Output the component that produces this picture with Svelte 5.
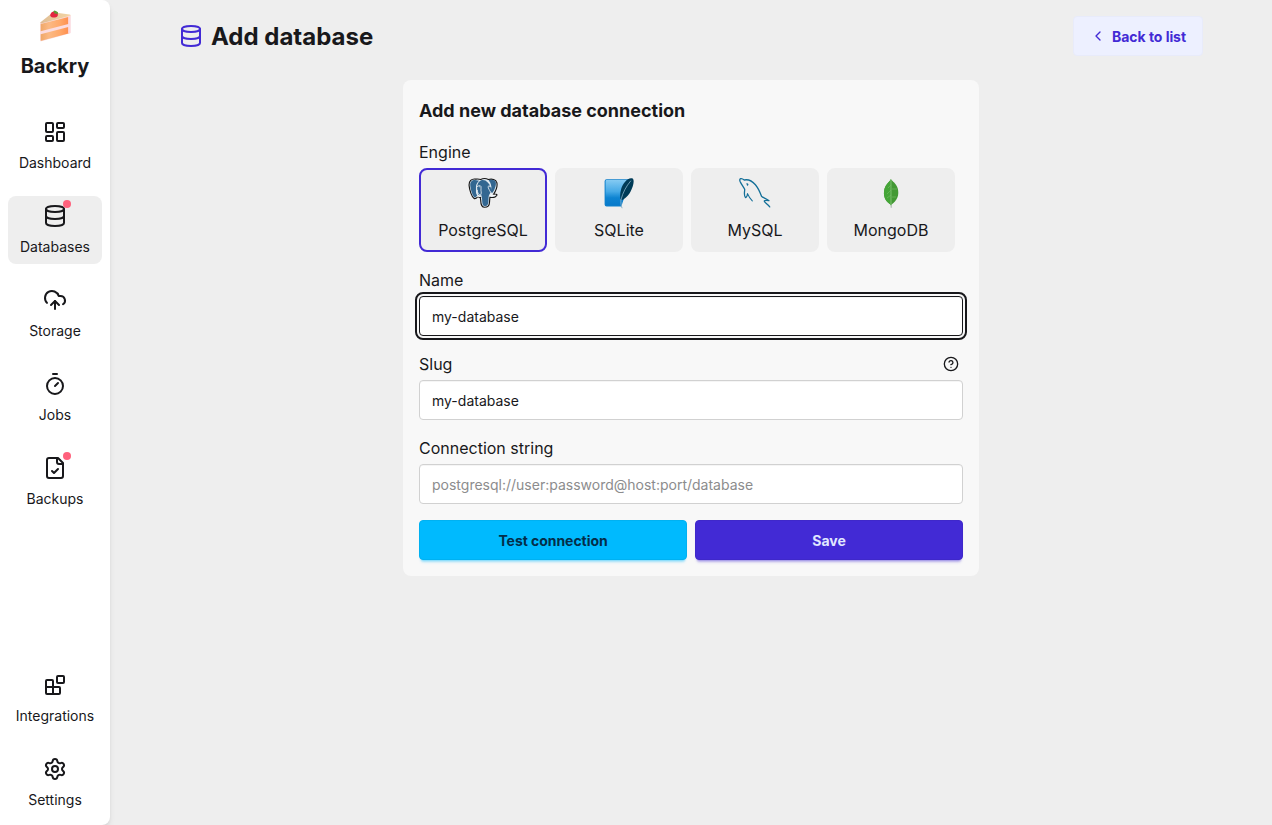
<script>
  const topItems = [
    { label: 'Dashboard', icon: 'dashboard' },
    { label: 'Databases', icon: 'database', active: true, dot: true },
    { label: 'Storage', icon: 'cloud' },
    { label: 'Jobs', icon: 'timer' },
    { label: 'Backups', icon: 'file', dot: true }
  ];
  const bottomItems = [
    { label: 'Integrations', icon: 'blocks' },
    { label: 'Settings', icon: 'settings' }
  ];
  const engines = ['PostgreSQL', 'SQLite', 'MySQL', 'MongoDB'];
  let engine = $state('PostgreSQL');
  let name = $state('my-database');
  let slug = $state('my-database');
  let connection = $state('');
</script>

{#snippet icon(kind, size)}
  <svg class="icon" width={size} height={size} viewBox="0 0 24 24" aria-hidden="true">
    {#if kind === 'dashboard'}
      <rect x="3" y="3" width="7" height="9" rx="1" /><rect x="14" y="3" width="7" height="5" rx="1" />
      <rect x="14" y="12" width="7" height="9" rx="1" /><rect x="3" y="16" width="7" height="5" rx="1" />
    {:else if kind === 'database'}
      <ellipse cx="12" cy="5" rx="9" ry="3" /><path d="M3 5v14a9 3 0 0 0 18 0V5" /><path d="M3 12a9 3 0 0 0 18 0" />
    {:else if kind === 'cloud'}
      <path d="M12 13v8" /><path d="M4 14.899A7 7 0 1 1 15.71 8h1.79a4.5 4.5 0 0 1 2.5 8.242" /><path d="m8 17 4-4 4 4" />
    {:else if kind === 'timer'}
      <path d="M10 2h4" /><path d="m12 14 3-3" /><circle cx="12" cy="14" r="8" />
    {:else if kind === 'file'}
      <path d="M15 2H6a2 2 0 0 0-2 2v16a2 2 0 0 0 2 2h12a2 2 0 0 0 2-2V7Z" /><path d="M14 2v4a2 2 0 0 0 2 2h4" /><path d="m9 15 2 2 4-4" />
    {:else if kind === 'blocks'}
      <rect x="14" y="3" width="7" height="7" rx="1" /><path d="M10 21V8a1 1 0 0 0-1-1H4a1 1 0 0 0-1 1v12a1 1 0 0 0 1 1h12a1 1 0 0 0 1-1v-5a1 1 0 0 0-1-1H3" />
    {:else if kind === 'settings'}
      <path d="M9.671 4.136a2.34 2.34 0 0 1 4.659 0 2.34 2.34 0 0 0 3.319 1.915 2.34 2.34 0 0 1 2.33 4.033 2.34 2.34 0 0 0 0 3.831 2.34 2.34 0 0 1-2.33 4.033 2.34 2.34 0 0 0-3.319 1.915 2.34 2.34 0 0 1-4.659 0 2.34 2.34 0 0 0-3.32-1.915 2.34 2.34 0 0 1-2.33-4.033 2.34 2.34 0 0 0 0-3.831A2.34 2.34 0 0 1 6.35 6.051a2.34 2.34 0 0 0 3.319-1.915" /><circle cx="12" cy="12" r="3" />
    {:else if kind === 'chevron'}
      <path d="m15 18-6-6 6-6" />
    {:else if kind === 'help'}
      <circle cx="12" cy="12" r="10" /><path d="M9.09 9a3 3 0 0 1 5.83 1c0 2-3 3-3 3" /><path d="M12 17h.01" />
    {/if}
  </svg>
{/snippet}

{#snippet engineLogo(kind)}
  <svg width="32" height="32" viewBox="0 0 32 32" aria-hidden="true">
    {#if kind === 'PostgreSQL'}
      <g transform="translate(.9 .9) scale(.94)">
        <path d="M8.5 1.3C3.7.5.9 3.5 1.3 8.2c.3 4.5 2.8 12.3 5.3 13.7 1.4.7 2.7-.5 3.8-1.8 1 .6 2 .8 3 .7-.5.8.2 1.5.2 3.1.1 4.1.8 7.3 4.1 7.3 3.6 0 5.2-1.7 5.3-5.4.2-2.1.2-3.6.4-5.1 3.1.5 6.3-.1 7.4-2.2.5-1.1-1-1.1-3.5-1 2.4-3.7 4.3-9.1 3.5-12.4-1-3.4-5.2-4.5-9-3.4-2.5-1.2-6.2-1-8.2.1-1.5-.6-3.4-.7-5.1-.5Z" fill="#dfe8ef" stroke="#171717" stroke-width="1.2" />
        <path d="M8.5 2.4C4.7 1.9 2.2 4 2.5 8.1c.4 4.7 2.8 11.7 4.6 12.7 1 .4 2-.7 3-2-1.2-1.5-1.7-3.1-1.5-5.5.3-3.1-1-6.3 3.3-10.2-1.1-.6-2.3-.8-3.4-.7Z" fill="#336791" />
        <path d="M14.2 2.5c-3.7 1.8-4.7 5.5-4.2 9.5.4 3.4.5 6.8 3.3 7.5l1.1-1.1c1.2 1.7.1 10.3 2.5 11.3 2.2.9 4.4-.4 4.8-3.3.3-2 .1-5.2.5-7.1.4-1.9 1.3-2.1 2.4-5.1.5-3.5-.7-6.5-3.5-9.3-1.8-2.1-4.5-3-6.9-2.4Z" fill="#336791" />
        <path d="M22 2.4c2.8 3 3.4 6.9 2.5 11.4-.2 1.5.6 2.2 1.3 2.3 2.4-2.7 4.8-8.9 3.8-11.8-.7-2.2-4.3-3.1-7.6-1.9Z" fill="#336791" />
        <path d="M9.9 9.2c1.5-1.1 3.5-1.4 4-.1.4 1-.2 2.5 0 4 .3 2.4.8 3.7-.8 5.4-1.2-1-3.8-3-3.1-5.1M24.6 9.2c-1.7-1.2-3.2-.7-3.1.4.1 1.4 1.2 3 2.5 5.4M13.2 18.5c-1.8.2-3.1.3-3.6 1.2 1.2.6 3 .5 4.2-.7M24 18.6c1.8.9 4 .6 5.4-.5-1.6.4-4 .4-5-.8" fill="none" stroke="#fff" stroke-width=".8" stroke-linecap="round" />
        <path d="M11.9 9.4h.8M22.7 9.2h.6" stroke="#fff" stroke-width=".8" />
      </g>
    {:else if kind === 'SQLite'}
      <defs><linearGradient id="sqlite-blue" x1=".5" y1="0" x2=".5" y2="1"><stop stop-color="#84caf2" /><stop offset=".45" stop-color="#45a9e6" /><stop offset=".7" stop-color="#0d83d1" /><stop offset="1" stop-color="#087aca" /></linearGradient></defs>
      <path d="M3.6 2.2H26v4L18.3 29.4H3.6a2 2 0 0 1-2-2V4.2a2 2 0 0 1 2-2Z" fill="#0f80cc" />
      <path d="M3.7 3.1H24l-6.3 25.4h-14a1.1 1.1 0 0 1-1.1-1.1V4.2c0-.7.5-1.1 1.1-1.1Z" fill="url(#sqlite-blue)" />
      <path d="M29.7 1.5c-4.5-2-9.8 4.9-11.4 10-1.3 4.2-1.5 7.8-.7 11.6l2.4-.3c4-2.7 6-5.3 7.6-8.3 2.3-4.4 4.3-11 2.1-13Z" fill="#003b57" />
      <path d="M27.9 3.7c-4.8 5.6-8.2 12.2-9.8 18.7" fill="none" stroke="#9cc4d8" stroke-width=".7" />
      <path d="M18 22c-.4 3.4 0 6.5 1.1 9.2" fill="none" stroke="#82aec6" stroke-width=".9" />
    {:else if kind === 'MySQL'}
      <g transform="translate(-.7 0)" fill="none" stroke="#136f98" stroke-width="1.3" stroke-linecap="round" stroke-linejoin="round">
        <path d="M7.2 20.5c-2-2.1-.8-5.3-.8-8.2C5 9.6 3 7.4 1.8 4.6.5 1.3 3.2.8 5.9 3c4.5-1 8.6 1.7 11.2 4.7 3.1 3.5 4.4 7 6.1 11.5 2.2 2.1 5.3 2.6 7.5 4.5-2-.3-4.4-.5-4.8.4.8 2 3.6 3.3 5.5 5.8" />
        <path d="M7.2 20.5c1-.2 1.8-1.5 2-3.9 1.5 3.6 2.5 5 4.8 7.2" stroke-width="1.1" />
        <path d="M8.6 6.8c.8-.1 1.2.7.6 1.3" />
      </g>
    {:else}
      <path d="M15.3 27h1.5l.3 3.7h-1.5Z" fill="#b8c4bc" />
      <path d="M16 1.9c-.8 2.3-4.8 4.4-6.5 9.9-1.7 6.8.4 12.3 6.5 16.1 6.4-4.2 8.5-9.8 6.7-16.6C21.1 6 17.2 4.3 16 1.9Z" fill="#439934" />
      <path d="M16 1.9c-.8 2.3-4.8 4.4-6.5 9.9-1.7 6.8.4 12.3 6.5 16.1Z" fill="#45a538" />
      <path d="M16 3v25.5" stroke="#8cc77f" stroke-width=".8" />
      <path d="m16 8-3 3m3 2-4 4m4 1-4 3M17 12h5m-5 8h4" fill="none" stroke="#77bc68" stroke-width=".6" />
    {/if}
  </svg>
{/snippet}

{#snippet navItem(item)}
  <a class="nav-item" class:active={item.active} href="#{item.label.toLowerCase()}">
    <span class="nav-icon">{@render icon(item.icon, 24)}{#if item.dot}<i class="dot"></i>{/if}</span>
    <span>{item.label}</span>
  </a>
{/snippet}

<div class="app">
  <aside>
    <div class="brand">
      <svg width="32" height="32" viewBox="0 0 32 32" aria-hidden="true">
        <defs>
          <linearGradient id="sponge"><stop stop-color="#efa768" /><stop offset=".3" stop-color="#fbb983" /><stop offset=".7" stop-color="#ffa869" /><stop offset="1" stop-color="#ff9050" /></linearGradient>
          <linearGradient id="topping"><stop stop-color="#dfbd95" /><stop offset="1" stop-color="#f4d5a4" /></linearGradient>
        </defs>
        <path d="M1.2 12.8 31.6 5v17.4q0 .9-.9 1.2L2.4 31.3q-1.2.2-1.2-.9Z" fill="#fbdcdf" />
        <path d="m1.2 12.6 11.6-9.4q1.4-1 3.2-.7l14.6 2.1q1.6.4.4 1.2L2 13.6Z" fill="url(#topping)" />
        <path d="M1.7 14.1 29.3 7v7.1L1.7 21.3Z" fill="url(#sponge)" />
        <path d="M1.7 24.3 29.3 17.1v6.3L2.4 30.7q-.7.1-.7-.5Z" fill="url(#sponge)" />
        <path d="M30.4 5.8v17.2" stroke="#fbd9e0" stroke-width="2" />
        <path d="M11.1 5.4c.2-2.8 2.8-4.6 5.3-3.8 2.7 1 3 3.6 1.8 5-1.5 1.4-6 1.5-7.1-1.2Z" fill="#e3263f" />
        <path d="M14.2 1.6 15.4.4l1.5.7 2.1 1.2-.3 1.9-1.8-.8-1.3.4-.4-1.2Z" fill="#5d9a35" />
      </svg>
      <strong>Backry</strong>
    </div>
    <nav>{#each topItems as item}{@render navItem(item)}{/each}</nav>
    <nav class="bottom">{#each bottomItems as item}{@render navItem(item)}{/each}</nav>
  </aside>

  <main>
    <div class="container">
      <header>
        <h1>{@render icon('database', 24)}<span>Add database</span></h1>
        <a class="back" href="#list">{@render icon('chevron', 16)}<span>Back to list</span></a>
      </header>

      <form class="card" onsubmit={(e) => e.preventDefault()}>
        <h2>Add new database connection</h2>
        <div class="label">Engine</div>
        <div class="engines">
          {#each engines as option}
            <button type="button" class="engine" class:selected={engine === option} onclick={() => (engine = option)}>
              {@render engineLogo(option)}
              <span>{option}</span>
            </button>
          {/each}
        </div>
        <label class="label" for="name">Name</label>
        <input id="name" class="focused" bind:value={name} />
        <label class="label" for="slug"><span>Slug</span><span class="help">{@render icon('help', 16)}</span></label>
        <input id="slug" bind:value={slug} />
        <label class="label" for="connection">Connection string</label>
        <input id="connection" bind:value={connection} placeholder="postgresql://user:password@host:port/database" />
        <div class="actions">
          <button type="button" class="btn info">Test connection</button>
          <button type="submit" class="btn primary">Save</button>
        </div>
      </form>
    </div>
  </main>
</div>

<style>
  :global(body) { background: #eee; }
  * { box-sizing: border-box; }
  .app { display: flex; height: 825px; overflow: hidden; background: #eee; color: #18181b; font: 16px/24px Inter, sans-serif; }
  a { color: inherit; text-decoration: none; }
  svg { display: block; flex: none; }
  .icon { fill: none; stroke: currentColor; stroke-width: 2; stroke-linecap: round; stroke-linejoin: round; }
  aside { display: flex; flex-direction: column; width: 110px; flex: none; padding: 10px 8px 8px; background: #fff; border-radius: 0 8px 8px 0; box-shadow: 0 4px 6px -1px #0000001a, 0 2px 4px -2px #0000001a; }
  .brand { display: flex; flex-direction: column; align-items: center; height: 102px; }
  .brand strong { margin-top: 10px; font-size: 20px; line-height: 28px; font-weight: 700; }
  nav { display: flex; flex-direction: column; gap: 16px; }
  .bottom { margin-top: auto; }
  .nav-item { display: flex; flex-direction: column; align-items: center; gap: 9px; height: 68px; padding-top: 8px; border-radius: 8px; font-size: 14px; line-height: 20px; white-space: nowrap; }
  .nav-item.active { background: #eee; }
  .nav-icon { position: relative; }
  .dot { position: absolute; top: -4px; right: -4px; width: 8px; height: 8px; border-radius: 50%; background: #ff627d; }
  main { flex: 1; padding-top: 16px; }
  .container { width: 1024px; margin: 0 auto; }
  header { display: flex; align-items: center; justify-content: space-between; height: 40px; margin-bottom: 24px; }
  h1 { display: flex; align-items: center; gap: 8px; margin: 0; font-size: 24px; line-height: 32px; font-weight: 700; }
  h1 span { padding-top: 2px; }
  h1 .icon { color: #422ad5; }
  .back { display: flex; align-items: center; gap: 6px; height: 40px; padding: 0 16px; border: 1px solid #e8ebfa; border-radius: 4px; background: #edf0ff; color: #422ad5; font-size: 14px; font-weight: 700; letter-spacing: -0.05px; }
  .back span { padding-top: 2px; }
  .card { width: 576px; height: 496px; margin: 0 auto; padding: 16px; border-radius: 8px; background: #f8f8f8; }
  h2 { margin: 0 0 14px; font-size: 18px; line-height: 30px; font-weight: 700; }
  .label { display: flex; justify-content: space-between; align-items: center; height: 24px; margin-bottom: 4px; }
  .help { margin-right: 4px; }
  .engines { display: flex; gap: 8px; margin-bottom: 16px; }
  .engine { display: flex; flex-direction: column; align-items: center; gap: 9px; width: 128px; height: 84px; padding: 7px 0 0; border: 2px solid #eee; border-radius: 8px; background: #eee; color: inherit; font: inherit; }
  .engine.selected { border-color: #422ad5; }
  input { display: block; width: 100%; height: 40px; margin: 0 0 16px; padding: 1px 12px 0; border: 1px solid #d1d1d1; border-radius: 4px; outline: none; background: #fff; color: #18181b; font: 14px/20px Inter, sans-serif; box-shadow: inset 0 1px #0000000a; }
  input.focused { border-color: #18181b; outline: 2px solid #18181b; outline-offset: 2px; }
  input::placeholder { color: #8c8c8d; opacity: 1; }
  .actions { display: flex; gap: 8px; }
  .btn { flex: 1; height: 40px; padding: 1px 0 0; border-radius: 4px; font: 700 14px/20px Inter, sans-serif; letter-spacing: -0.05px; }
  .info { border: 1px solid #00b1f1; background: #00bafe; color: #042e49; box-shadow: 0 3px 2px -2px #00bafe4d, 0 4px 3px -2px #00bafe4d; }
  .primary { border: 1px solid #3f28ca; background: #422ad5; color: #e0e7ff; box-shadow: 0 3px 2px -2px #422ad54d, 0 4px 3px -2px #422ad54d; }
</style>
